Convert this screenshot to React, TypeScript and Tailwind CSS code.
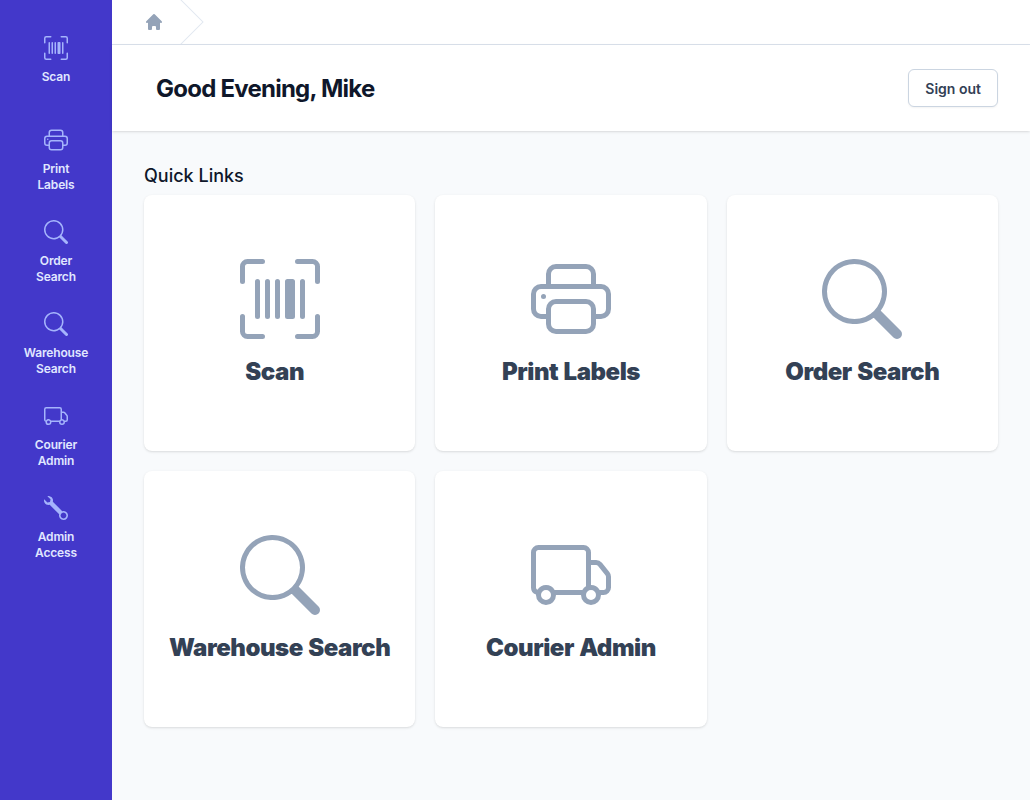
import type { IconType } from 'react-icons';
import { BsPrinter, BsSearch, BsTruck, BsUpcScan, BsWrench } from 'react-icons/bs';
import { HiHome } from 'react-icons/hi';

type LinkItem = { name: string; icon: IconType; nudge?: string };

const navigation: LinkItem[] = [
  { name: 'Scan', icon: BsUpcScan },
  { name: 'Print Labels', icon: BsPrinter },
  { name: 'Order Search', icon: BsSearch },
  { name: 'Warehouse Search', icon: BsSearch },
  { name: 'Courier Admin', icon: BsTruck },
  { name: 'Admin Access', icon: BsWrench },
];

const quickLinks: LinkItem[] = [
  { name: 'Scan', icon: BsUpcScan, nudge: 'pr-[10px]' },
  { name: 'Print Labels', icon: BsPrinter },
  { name: 'Order Search', icon: BsSearch },
  { name: 'Warehouse Search', icon: BsSearch },
  { name: 'Courier Admin', icon: BsTruck },
];

function Sidebar() {
  return (
    <nav className="flex w-28 shrink-0 flex-col gap-1 bg-[#4338ca] px-2 pt-6">
      {navigation.map(({ name, icon: Icon }) => (
        <a key={name} href="#" className="flex h-[88px] flex-col items-center px-4 pt-3">
          <Icon className="size-6 shrink-0 text-[#a5b4fc]" />
          <span className="mt-[9px] text-center text-xs font-semibold tracking-[-0.15px] text-[#e0e7ff]">{name}</span>
        </a>
      ))}
    </nav>
  );
}

function Breadcrumb() {
  return (
    <nav className="flex h-[45px] border-b border-[#dbe2ec] bg-white pl-8">
      <a href="#" className="flex items-center">
        <HiHome className="size-5 text-[#94a3b8]" />
      </a>
      <svg className="ml-4 h-full w-6 text-[#e2e8f0]" viewBox="0 0 24 44" preserveAspectRatio="none" fill="currentColor">
        <path d="M.293 0l22 22-22 22h1.414l22-22-22-22H.293z" />
      </svg>
    </nav>
  );
}

export default function App() {
  return (
    <div className="flex h-screen overflow-hidden bg-[#f8fafc] font-['Inter','Liberation_Sans',sans-serif]">
      <Sidebar />
      <div className="flex min-w-0 flex-1 flex-col">
        <Breadcrumb />
        <header className="flex h-[86px] shrink-0 items-center justify-between bg-white pr-8 pl-11 shadow">
          <h1 className="pt-0.5 text-2xl font-bold tracking-[-0.76px] text-[#0f172a]">Good Evening, Mike</h1>
          <button className="rounded-md border border-[#cbd5e1] bg-white px-4 pt-[9px] pb-[7px] text-sm font-semibold text-[#334155] shadow-xs">
            Sign out
          </button>
        </header>
        <main className="px-8 pt-[31px]">
          <h2 className="text-lg font-medium text-[#0f172a]">Quick Links</h2>
          <ul className="mt-[5px] grid grid-cols-3 gap-5">
            {quickLinks.map(({ name, icon: Icon, nudge }) => (
              <li key={name} className="flex h-64 flex-col items-center rounded-lg bg-white pt-16 shadow">
                <Icon className="size-20 text-[#94a3b8]" />
                <span
                  className={`mt-[17px] text-2xl font-black tracking-[-0.45px] whitespace-nowrap text-[#334155] [word-spacing:1px] ${nudge ?? ''}`}
                >
                  {name}
                </span>
              </li>
            ))}
          </ul>
        </main>
      </div>
    </div>
  );
}
